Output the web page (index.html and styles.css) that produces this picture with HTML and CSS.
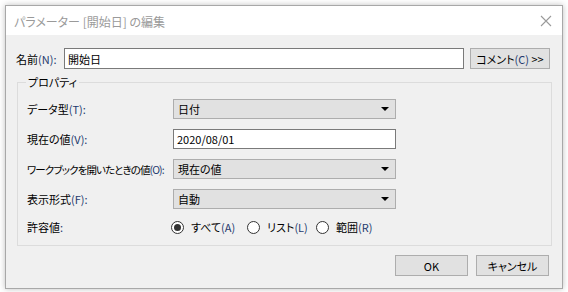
FILE: index.html
```html
<!DOCTYPE html>
<html lang="ja">
<head>
    <meta charset="UTF-8">
    <title>パラメーター [開始日] の編集</title>
    <link rel="stylesheet" href="styles.css">
</head>
<body>
    <div class="window">
        <div class="titlebar">
            <span class="title">パラメーター [開始日] の編集</span>
            <svg class="close" width="12" height="12" viewBox="0 0 12 12">
                <path d="M1 1 L11 11 M11 1 L1 11" stroke="#9a9a9a" stroke-width="1.1" fill="none"/>
            </svg>
        </div>

        <div class="content">
            <div class="name-row">
                <label class="name-label">名前<span class="key">(N):</span></label>
                <input type="text" class="textbox name-input" value="開始日">
                <button type="button" class="btn comment-btn">コメント<span class="key">(C)</span> &gt;&gt;</button>
            </div>

            <fieldset class="group">
                <legend>プロパティ</legend>

                <div class="row">
                    <label>データ型<span class="key">(T):</span></label>
                    <div class="combo">日付<span class="arrow"></span></div>
                </div>
                <div class="row">
                    <label>現在の値<span class="key">(V):</span></label>
                    <input type="text" class="textbox combo-input" value="2020/08/01">
                </div>
                <div class="row">
                    <label class="long">ワークブックを開いたときの値<span class="key">(O):</span></label>
                    <div class="combo">現在の値<span class="arrow"></span></div>
                </div>
                <div class="row">
                    <label>表示形式<span class="key">(F):</span></label>
                    <div class="combo">自動<span class="arrow"></span></div>
                </div>
                <div class="row radios-row">
                    <label>許容値<span class="key">:</span></label>
                    <div class="radios">
                        <div class="option opt-all"><span class="radio checked"></span>すべて<span class="key">(A)</span></div>
                        <div class="option opt-list"><span class="radio"></span>リスト<span class="key">(L)</span></div>
                        <div class="option"><span class="radio"></span>範囲<span class="key">(R)</span></div>
                    </div>
                </div>
            </fieldset>

            <div class="footer">
                <button type="button" class="btn ok-btn">OK</button>
                <button type="button" class="btn cancel-btn">キャンセル</button>
            </div>
        </div>
    </div>
</body>
</html>
```

FILE: styles.css
```css
body {
    margin: 0;
    padding: 0;
    background-color: #ffffff;
    font-family: "Noto Sans CJK JP", sans-serif;
    font-size: 11px;
    font-feature-settings: "palt";
    color: #000;
}

.window {
    margin: 5px;
    width: 556px;
    height: 282px;
    border: 1px solid #a8a8a8;
    background-color: #f0f0f0;
    box-shadow: 0 0 6px rgba(0, 0, 0, 0.25);
    display: flex;
    flex-direction: column;
}

.titlebar {
    height: 29px;
    background-color: #fff;
    display: flex;
    align-items: center;
    justify-content: space-between;
    padding: 0 10px 0 8px;
}

.title {
    color: #9a9a9a;
    font-size: 12px;
    padding-top: 1px;
}

.close {
    margin-top: 1px;
}

.content {
    padding: 13px 12px 0 10px;
}

.key {
    color: #1f3a6e;
}

.name-row {
    display: flex;
    align-items: center;
    height: 21px;
}

.name-label {
    width: 48px;
    white-space: nowrap;
}

.textbox {
    box-sizing: border-box;
    border: 1px solid #7a7a7a;
    background: #fff;
    font-family: inherit;
    font-size: 11px;
    font-feature-settings: "palt";
    padding: 0 0 0 3px;
    margin: 0;
    outline: none;
}

.name-input {
    width: 400px;
    height: 21px;
}

.btn {
    box-sizing: border-box;
    background-color: #e1e1e1;
    border: 1px solid #adadad;
    font-family: inherit;
    font-size: 11px;
    font-feature-settings: "palt";
    color: #000;
    padding: 0;
    margin: 0;
    height: 21px;
}

.comment-btn {
    width: 80px;
    margin-left: 6px;
}

.group {
    margin: 6px 0 0 1px;
    width: 535px;
    height: 171px;
    box-sizing: border-box;
    border: 1px solid #dcdcdc;
    padding: 10px 0 0 9px;
}

.group legend {
    padding: 0 2px;
    margin-left: -1px;
    line-height: 14px;
}

.row {
    display: flex;
    align-items: center;
    height: 20px;
    margin-bottom: 10px;
}

.row label {
    width: 146px;
    white-space: nowrap;
}

.row label.long {
    font-size: 10.5px;
    letter-spacing: -0.9px;
}

.combo {
    box-sizing: border-box;
    width: 223px;
    height: 20px;
    background-color: #e1e1e1;
    border: 1px solid #adadad;
    padding-left: 4px;
    display: flex;
    align-items: center;
    justify-content: space-between;
}

.combo-input {
    width: 223px;
    height: 20px;
}

.arrow {
    width: 0;
    height: 0;
    border-left: 4px solid transparent;
    border-right: 4px solid transparent;
    border-top: 4px solid #000;
    margin-right: 6px;
}

.radios-row {
    margin-top: -2px;
}

.radios {
    display: flex;
    align-items: center;
    margin-left: -2px;
}

.option {
    display: flex;
    align-items: center;
}

.opt-all {
    width: 76px;
}

.opt-list {
    width: 69px;
}

.radio {
    box-sizing: border-box;
    width: 13px;
    height: 13px;
    border: 1px solid #333;
    border-radius: 50%;
    background: #fff;
    display: inline-flex;
    align-items: center;
    justify-content: center;
    margin-right: 7px;
}

.radio.checked::after {
    content: "";
    width: 7px;
    height: 7px;
    border-radius: 50%;
    background: #333;
}

.footer {
    display: flex;
    justify-content: flex-end;
    gap: 8px;
    margin-top: 9px;
    padding-right: 1px;
}

.ok-btn, .cancel-btn {
    width: 73px;
}
```
